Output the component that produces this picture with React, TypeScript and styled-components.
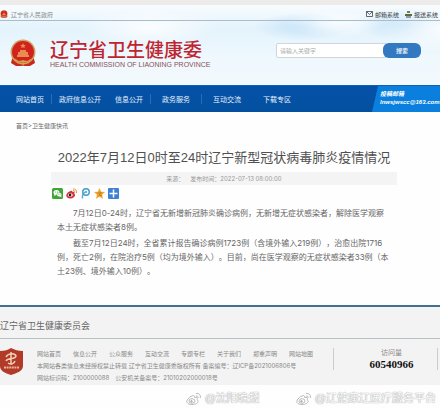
import React from 'react';
import styled, { createGlobalStyle } from 'styled-components';

const Global = createGlobalStyle`
  * { box-sizing: border-box; }
  body {
    margin: 0;
    background: #fefefe;
    font-family: Inter, "Noto Sans CJK SC", sans-serif;
    color: #555;
    text-spacing-trim: space-all;
  }
  a { color: inherit; text-decoration: none; }
  p, h1, h2 { margin: 0; font-weight: 400; }
`;

const Page = styled.div`overflow: hidden; white-space: nowrap;`;
const Sky = styled.header`
  border-top: 5px solid #eeeceb;
  background:
    radial-gradient(ellipse 50px 14px at 76% 23%, #ffffffcc, transparent),
    radial-gradient(ellipse 70px 18px at 34% 28%, #ffffffdd, transparent),
    radial-gradient(ellipse 60px 24px at 100% 30%, #ffffffcc, transparent),
    radial-gradient(ellipse 50px 14px at 69% 27%, #c4e2f8, transparent),
    radial-gradient(ellipse 50px 16px at 92% 24%, #c8e4f8, transparent),
    linear-gradient(#f8fcfe, #e4f3fc 30%, #eef8fd 65%, #f3f9fd);
`;
const TopBar = styled.div`
  display: flex;
  align-items: center;
  height: 16px;
  padding: 3px 2px 0 0;
  gap: 6px;
  border-bottom: 1px solid #a9bdc8;
  font-size: 6px;
`;
const TopLink = styled.a<{ $first?: boolean }>`
  display: flex;
  align-items: center;
  gap: ${p => (p.$first ? 3 : 2)}px;
  margin-right: ${p => (p.$first ? 'auto' : '0')};
  color: ${p => (p.$first ? '#888' : '#444')};
`;
const Brand = styled.div`
  display: flex;
  align-items: center;
  height: 64px;
  padding: 0 19px 0 9px;
`;
const Names = styled.div`margin: 0 auto 0 13px;`;
const BrandName = styled.div`
  font: 500 19px/20px "Noto Sans CJK SC", sans-serif;
  color: #bf2530;
`;
const BrandEnglish = styled.div`
  margin-top: 2px;
  font: 7px/7px "Liberation Sans", sans-serif;
  color: #8d5058;
`;
const Search = styled.form`display: flex; height: 15px; width: 145px; margin-bottom: 6px;`;
const SearchInput = styled.input`
  flex: 1;
  min-width: 0;
  margin-right: -4px;
  padding: 0 3px;
  border: 1px solid #cfd6da;
  border-radius: 2px;
  background: #fff;
  font: 6px "Noto Sans CJK SC", sans-serif;
  &::placeholder { color: #aaa; }
`;
const SearchButton = styled.button`
  width: 38px;
  padding: 0;
  border: 0;
  border-radius: 6px;
  background: #3279c1;
  color: #fff;
  font: 500 6px "Noto Sans CJK SC", sans-serif;
`;
const Nav = styled.nav`
  display: flex;
  align-items: center;
  height: 27px;
  padding-left: 9px;
  border-top: 1px solid #0b62b5;
  background: linear-gradient(#0551a8, #04509f);
  color: #e8f2fc;
  font-size: 7px;
`;
const NavLink = styled.a<{ $wide?: boolean; $line?: boolean }>`
  padding: 0 ${p => (p.$wide ? 11 : 7)}px;
  border-right: ${p => (p.$line ? 1 : 0)}px solid #2c6cb3;
`;
const Mail = styled.a`
  align-self: stretch;
  display: flex;
  flex-direction: column;
  justify-content: center;
  width: 68px;
  margin-left: auto;
  padding: 0 0 2px 8px;
  background: #0a7fdd;
  clip-path: polygon(6px 0, 100% 0, 100% 100%, 0 100%);
  color: #fff;
  font: italic bold 6px/8px "Liberation Sans", "Noto Sans CJK SC", sans-serif;
`;
const Crumbs = styled.nav`padding: 8px 16px 0; font-size: 6px; line-height: 11px; color: #666;`;
const Article = styled.main`padding: 17px 43px 25px 51px;`;
const Title = styled.h1`
  font: 13px/20px "Liberation Sans", "Noto Sans CJK SC", sans-serif;
  text-align: center;
  color: #505050;
`;
const Meta = styled.div`
  display: flex;
  justify-content: center;
  gap: 6px;
  margin-top: 4px;
  background: #f4f4f4;
  color: #999;
  font-size: 6px;
  line-height: 13px;
`;
const Share = styled.div`display: flex; gap: 3px; padding: 3px 1px 7px;`;
const ShareButton = styled.button`
  width: 11px;
  height: 11px;
  padding: 0;
  border: 0;
  background: none;
  svg { display: block; }
`;
const Paragraph = styled.p`
  margin: 0 0 2px 6px;
  text-indent: 16px;
  font-size: 8px;
  line-height: 14px;
  color: #666;
`;
const Footer = styled.footer`
  border-top: 2px solid #42708f;
  background: #f3f3f3;
  color: #888;
  font-size: 6px;
`;
const FooterTitle = styled.h2`
  padding: 13px 0 6px;
  border-bottom: 1px solid #b5c1c3;
  font-size: 9px;
  line-height: 12px;
  color: #666;
`;
const FooterBody = styled.div`display: flex; padding: 9px 2px 1px 0;`;
const Badge = styled.div`width: 37px;`;
const FooterText = styled.div`flex: 1; min-width: 0; line-height: 12px;`;
const FooterLinks = styled.div`display: flex; gap: 12px;`;
const Visits = styled.div`
  width: 105px;
  height: 22px;
  padding-left: 12px;
  border: solid #ccc;
  border-width: 0 1px;
  text-align: center;
  font-size: 7px;
  line-height: 9px;
`;
const Count = styled.div`font: bold 11px/15px "Liberation Serif", serif; color: #111;`;
const Marks = styled.div`
  display: flex;
  justify-content: flex-end;
  gap: 36px;
  padding: 6px 4px 1px;
  color: #fff;
  font: 11px/15px "Liberation Sans", "Noto Sans CJK SC", sans-serif;
  text-shadow: 0 0 1px #999, 0 0 1px #aaa;
`;
const Mark = styled.span`display: flex; align-items: center; gap: 4px;`;

const Emblem = ({ size }: { size: number }) => (
  <svg width={size} height={size} viewBox="0 0 28 28">
    <path d="M4 16 2 24l5 3h14l5-3-2-8z" fill="#c8281f" />
    <circle cx="14" cy="13" r="12.5" fill="#c9a765" />
    <circle cx="14" cy="13" r="11" fill="#d2221c" />
    <path d="m14 4 .9 2 2.1.1-1.7 1.2.6 2-1.9-1.1-1.9 1.1.6-2L11 6.1l2.1-.1zM8 18v-2h1v-3h2v-2h6v2h2v3h1v2z" fill="#e98c52" />
    <path d="M5 20c5 4 13 4 18 0M8 24c4-3 8-3 12 0M14 21v6" fill="none" stroke="#d6a24c" strokeWidth="1.1" />
  </svg>
);

const Weibo = () => (
  <svg width="15" height="14" viewBox="0 0 15 14" fill="#fff" stroke="#aaa" strokeWidth=".8">
    <path d="M6 4c2-1 3 0 2.500 1.500C11 5 12 6 11 7.500c3 2 0 5-5 5S-.5 9.500 2 7c1-1.500 2.500-2.500 4-3z" />
    <ellipse cx="6" cy="9" rx="3" ry="2.300" />
    <circle cx="5.500" cy="9.300" r=".8" fill="#aaa" />
    <path d="M10 4c1.500-.3 2.500.7 2 2M10 1.500c3-.6 5 1.600 4.300 4.500" fill="none" />
  </svg>
);

const shares = [
  { label: '微信', art: <><rect width="22" height="22" rx="3" fill="#3fa535" /><ellipse cx="9" cy="9" rx="6" ry="5" fill="#fff" /><path d="m5 12-1 4 4-2z" fill="#fff" /><ellipse cx="14.500" cy="13.500" rx="5" ry="4.200" fill="#fff" stroke="#3fa535" /><path d="m16 17 3 2-.5-4z" fill="#fff" /><g fill="#3fa535"><circle cx="7" cy="8" r="1" /><circle cx="11" cy="8" r="1" /><circle cx="13" cy="13" r=".8" /><circle cx="16" cy="13" r=".8" /></g></> },
  { label: '微博', art: <><path d="M9 6c3-1 4 0 3.500 2 4-1 5 1 4 3 4 3 0 10-8 10S-1 15 2 11c2-3 4-4 7-5z" fill="#d6303a" /><ellipse cx="8.500" cy="14" rx="5" ry="3.600" fill="#fff" /><circle cx="8" cy="14" r="2.800" fill="#222" /><path d="M14 5c3 0 4 2 3.500 4M14 2c5-1 8 3 7 8" fill="none" stroke="#e8953a" strokeWidth="2" /></> },
  { label: '腾讯微博', art: <><path d="M5 21c-1-6 1-10 5-13" fill="none" stroke="#69a9ca" strokeWidth="3" /><circle cx="12" cy="8" r="6.500" fill="none" stroke="#3d9fd0" strokeWidth="3" /><circle cx="12" cy="8" r="2" fill="#3d9fd0" /></> },
  { label: 'QQ空间', art: <><path d="m11 0 3.200 7.500 7.800.5-6 5.500 2 8-7-4-7 4 2-8-6-5.500 7.800-.5z" fill="#f0a52c" /><path d="m7 10 8-.5-5 5 6 .5" fill="none" stroke="#c66a1b" strokeWidth="1.500" /></> },
  { label: '更多', art: <><rect width="22" height="22" rx="2" fill="#3d82d6" /><path d="M11 3v16M3 11h16" stroke="#fff" strokeWidth="3" /></> },
];

const navItems = [
  { text: '网站首页', line: true },
  { text: '政府信息公开' },
  { text: '信息公开', line: true },
  { text: '政务服务', wide: true, line: true },
  { text: '互动交流', wide: true },
  { text: '下载专区', wide: true },
];
const footerItems = ['网站首页', '信息公开', '公众服务', '互动交流', '专题专栏', '关于我们', '郑重声明', '网站地图'];

export default function App() {
  return (
    <Page lang="zh-CN">
      <Global />
      <Sky>
        <TopBar>
          <TopLink $first href="#gov"><Emblem size={8} />辽宁省人民政府</TopLink>
          <TopLink href="#mail">
            <svg width="7" height="6" viewBox="0 0 7 6" fill="none" stroke="#444"><path d="M.5.5h6v5h-6zM.5.5l3 3 3-3" strokeWidth=".8" /></svg>
            邮箱系统
          </TopLink>
          <TopLink href="#report">
            <svg width="7" height="7" viewBox="0 0 7 7"><path d="M2 0h3v2H2z" fill="#777" /><path d="M0 3h7v2H0z" fill="#5f6d3a" /><path d="M1 5h5v2H1z" fill="#999" /></svg>
            报送系统
          </TopLink>
        </TopBar>
        <Brand>
          <Emblem size={28} />
          <Names>
            <BrandName>辽宁省卫生健康委</BrandName>
            <BrandEnglish>HEALTH COMMISSION OF LIAONING PROVINCE</BrandEnglish>
          </Names>
          <Search onSubmit={e => e.preventDefault()}>
            <SearchInput aria-label="搜索" placeholder="请输入关键字" />
            <SearchButton>搜索</SearchButton>
          </Search>
        </Brand>
      </Sky>
      <Nav>
        {navItems.map(n => <NavLink key={n.text} href="#nav" $wide={n.wide} $line={n.line}>{n.text}</NavLink>)}
        <Mail href="mailto:lnwsjwscc@163.com"><span>投稿邮箱</span><span>lnwsjwscc@163.com</span></Mail>
      </Nav>
      <Crumbs><a href="#home">首页</a>&gt;<a href="#news">卫生健康快讯</a></Crumbs>
      <Article>
        <Title>2022年7月12日0时至24时辽宁新型冠状病毒肺炎疫情情况</Title>
        <Meta><span>来源：</span><span>发布时间：2022-07-13 08:00:00</span></Meta>
        <Share>
          {shares.map(s => (
            <ShareButton key={s.label} aria-label={s.label}>
              <svg width="11" height="11" viewBox="0 0 22 22">{s.art}</svg>
            </ShareButton>
          ))}
        </Share>
        <Paragraph>
          7月12日0-24时，辽宁省无新增新冠肺炎确诊病例，无新增无症状感染者，解除医学观察<br />
          本土无症状感染者8例。
        </Paragraph>
        <Paragraph>
          截至7月12日24时，全省累计报告确诊病例1723例（含境外输入219例），治愈出院1716<br />
          例，死亡2例，在院治疗5例（均为境外输入）。目前，尚在医学观察的无症状感染者33例（本<br />
          土23例、境外输入10例）。
        </Paragraph>
      </Article>
      <Footer>
        <FooterTitle>辽宁省卫生健康委员会</FooterTitle>
        <FooterBody>
          <Badge>
            <svg width="23" height="27" viewBox="0 0 23 27">
              <path d="M0 3c5 0 8-1 11-3 4 2 7 3 12 3v15c0 5-6 7-12 9C5 25 0 23 0 18z" fill="#b23a28" />
              <path d="M11 4v12M6 9c2-4 9-4 10-1-1 4-8 1-10 5M8 15c3 2 6 1 7-2" fill="none" stroke="#f1d2b8" strokeWidth="1.500" />
              <path d="M4 19.500h15" stroke="#e6b39c" strokeWidth="2" strokeDasharray="2 .6" />
            </svg>
          </Badge>
          <FooterText>
            <FooterLinks>{footerItems.map(t => <a key={t} href="#footer">{t}</a>)}</FooterLinks>
            <div>本网站各类信息未经授权禁止转载 辽宁省卫生健康委版权所有 备案编号：辽ICP备2021006806号</div>
            <div>网站标识码：2100000088&emsp;公安机关备案号：21010202000018号</div>
          </FooterText>
          <Visits>访问量<Count>60540966</Count></Visits>
        </FooterBody>
      </Footer>
      <Marks>
        <Mark><Weibo />@沈阳晚报</Mark>
        <Mark><Weibo />@辽健康辽医疗服务平台</Mark>
      </Marks>
    </Page>
  );
}
